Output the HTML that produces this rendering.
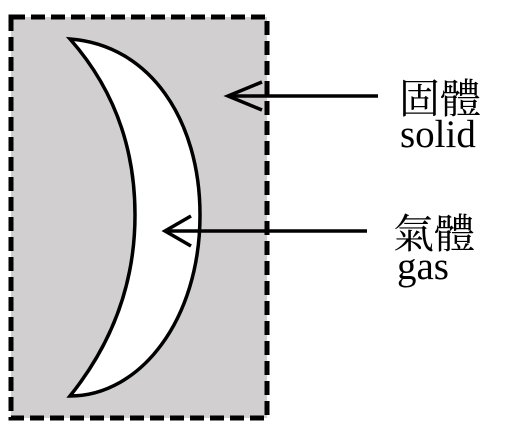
<!DOCTYPE html>
<html><head><style>
html,body{margin:0;padding:0;background:#fff;width:510px;height:444px;overflow:hidden}
text{font-family:"Liberation Serif","Noto Serif CJK SC",serif}
</style></head><body>
<svg width="510" height="444" xmlns="http://www.w3.org/2000/svg">
<rect x="11" y="17" width="256" height="401" fill="#d1cfd0" stroke="#000" stroke-width="5" stroke-dasharray="14,6"/>
<path d="M70,39 C150,45 200,120 200,215 C200,320 140,396 70,396 C115,340 135,280 135,215 C135,150 115,90 70,39 Z" fill="#fff" stroke="#000" stroke-width="3.5"/>
<g stroke="#000" stroke-width="3.5" fill="none">
<line x1="228" y1="96" x2="378" y2="96"/>
<polyline points="262,82 228,96 262,110"/>
<line x1="165" y1="231" x2="367" y2="231"/>
<polyline points="191,216 165,231 191,246"/>
</g>
<g fill="#000">
<text x="399" y="113" font-size="41">固體</text>
<text x="400" y="147" font-size="39">solid</text>
<text x="393" y="248" font-size="41">氣體</text>
<text x="397" y="279" font-size="39">gas</text>
</g>
</svg>
</body></html>
